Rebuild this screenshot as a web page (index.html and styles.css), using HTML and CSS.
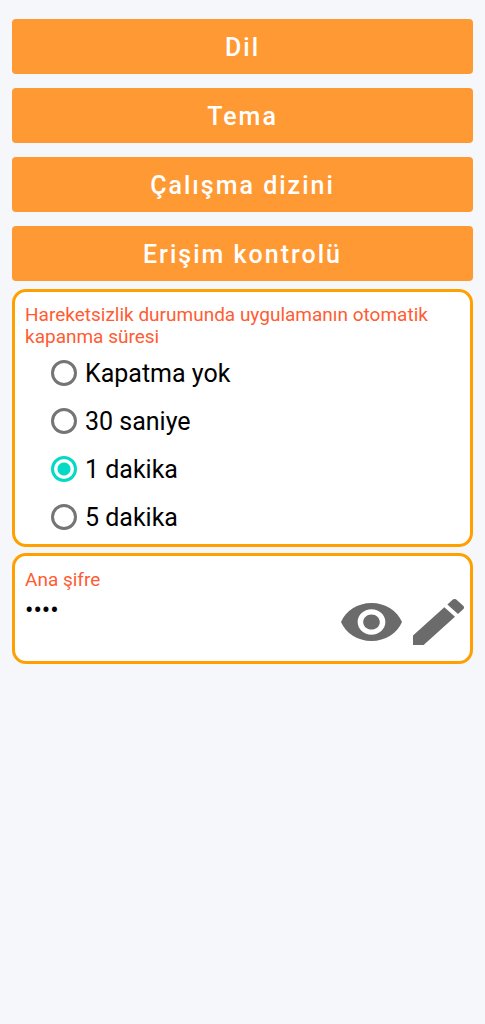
FILE: index.html
```html
<!DOCTYPE html>
<html lang="tr">
<head>
    <meta charset="UTF-8">
    <meta name="viewport" content="width=device-width, initial-scale=1.0">
    <title>Ayarlar</title>
    <link rel="stylesheet" href="styles.css">
</head>
<body>
    <main class="settings">
        <div class="menu">
            <button class="menu-button" type="button">Dil</button>
            <button class="menu-button" type="button">Tema</button>
            <button class="menu-button" type="button">Çalışma dizini</button>
            <button class="menu-button" type="button">Erişim kontrolü</button>
        </div>

        <fieldset class="card timeout-card">
            <legend class="card-title">Hareketsizlik durumunda uygulamanın otomatik kapanma süresi</legend>
            <div class="options">
                <label class="option"><input type="radio" name="timeout" value="0">Kapatma yok</label>
                <label class="option"><input type="radio" name="timeout" value="30">30 saniye</label>
                <label class="option"><input type="radio" name="timeout" value="60" checked>1 dakika</label>
                <label class="option"><input type="radio" name="timeout" value="300">5 dakika</label>
            </div>
        </fieldset>

        <div class="card password-card">
            <div class="password-field">
                <label class="card-title" for="password">Ana şifre</label>
                <input class="password-input" type="password" id="password" value="1234" readonly>
            </div>
            <div class="actions">
                <button class="icon-button" type="button" aria-label="Şifreyi göster">
                    <svg class="icon-eye" viewBox="1 4.5 22 15" preserveAspectRatio="none">
                        <path d="M12 4.5C7 4.5 2.73 7.61 1 12c1.73 4.39 6 7.5 11 7.5s9.27-3.11 11-7.5c-1.73-4.39-6-7.5-11-7.5zM12 17c-2.76 0-5-2.24-5-5s2.24-5 5-5 5 2.24 5 5-2.24 5-5 5zm0-8c-1.66 0-3 1.34-3 3s1.34 3 3 3 3-1.34 3-3-1.34-3-3-3z"/>
                    </svg>
                </button>
                <button class="icon-button" type="button" aria-label="Şifreyi düzenle">
                    <svg class="icon-edit" viewBox="3 3 18 18" preserveAspectRatio="none">
                        <path d="M3 17.25V21h3.75L17.81 9.94l-3.75-3.75L3 17.25zM20.71 7.04c.39-.39.39-1.02 0-1.41l-2.34-2.34c-.39-.39-1.02-.39-1.41 0l-1.83 1.83 3.75 3.75 1.83-1.83z"/>
                    </svg>
                </button>
            </div>
        </div>
    </main>
</body>
</html>
```
FILE: styles.css
```css
* {
    margin: 0;
    padding: 0;
    box-sizing: border-box;
    font-family: Roboto, sans-serif;
}

:root {
    --background: #F5F7FB;
    --card-background: #FFFFFF;
    --button: #FF9933;
    --border-color: #FFA000;
    --title: #FF5C33;
    --text: #000000;
    --accent: #03DAC5;
    --radio: #757575;
    --icon: #6B6B6B;
}

body {
    background-color: var(--background);
    color: var(--text);
    min-height: 100vh;
}

.settings {
    padding: 19px 12px;
}

.menu {
    display: flex;
    flex-direction: column;
    gap: 14px;
    margin-bottom: 8px;
}

.menu-button {
    height: 55px;
    padding-top: 2px;
    background: var(--button);
    border: none;
    border-radius: 4px;
    color: #FFFFFF;
    font-size: 25px;
    font-weight: 500;
    letter-spacing: 2px;
    cursor: pointer;
}

.card {
    background: var(--card-background);
    border: 3px solid var(--border-color);
    border-radius: 14px;
    padding: 12px 10px 3px;
}

.card-title {
    display: block;
    color: var(--title);
    font-size: 19px;
    line-height: 22px;
}

.timeout-card {
    margin-bottom: 6px;
}

/* keep the legend inside the border */
.timeout-card .card-title {
    float: left;
    width: 100%;
}

.options {
    clear: both;
    padding: 1px 0 0 26px;
}

.option {
    display: flex;
    align-items: center;
    gap: 8px;
    height: 48px;
    font-size: 25px;
    cursor: pointer;
}

.option input {
    appearance: none;
    width: 26px;
    height: 26px;
    border: 3px solid var(--radio);
    border-radius: 50%;
}

.option input:checked {
    border-color: var(--accent);
    background: radial-gradient(circle, var(--accent) 6px, transparent 7px);
}

.password-card {
    display: flex;
    padding: 13px 6px 16px 10px;
}

.password-field {
    flex: 1;
    min-width: 0;
}

.password-input {
    display: block;
    width: 100%;
    height: 38px;
    border: none;
    outline: none;
    background: transparent;
    color: var(--text);
    font-size: 25px;
}

.actions {
    display: flex;
    align-items: center;
    gap: 11px;
    padding-top: 30px;
}

.icon-button {
    display: flex;
    background: transparent;
    border: none;
    cursor: pointer;
}

.icon-button svg {
    fill: var(--icon);
}

.icon-eye {
    width: 61px;
    height: 38px;
}

.icon-edit {
    width: 51px;
    height: 46px;
}
```
